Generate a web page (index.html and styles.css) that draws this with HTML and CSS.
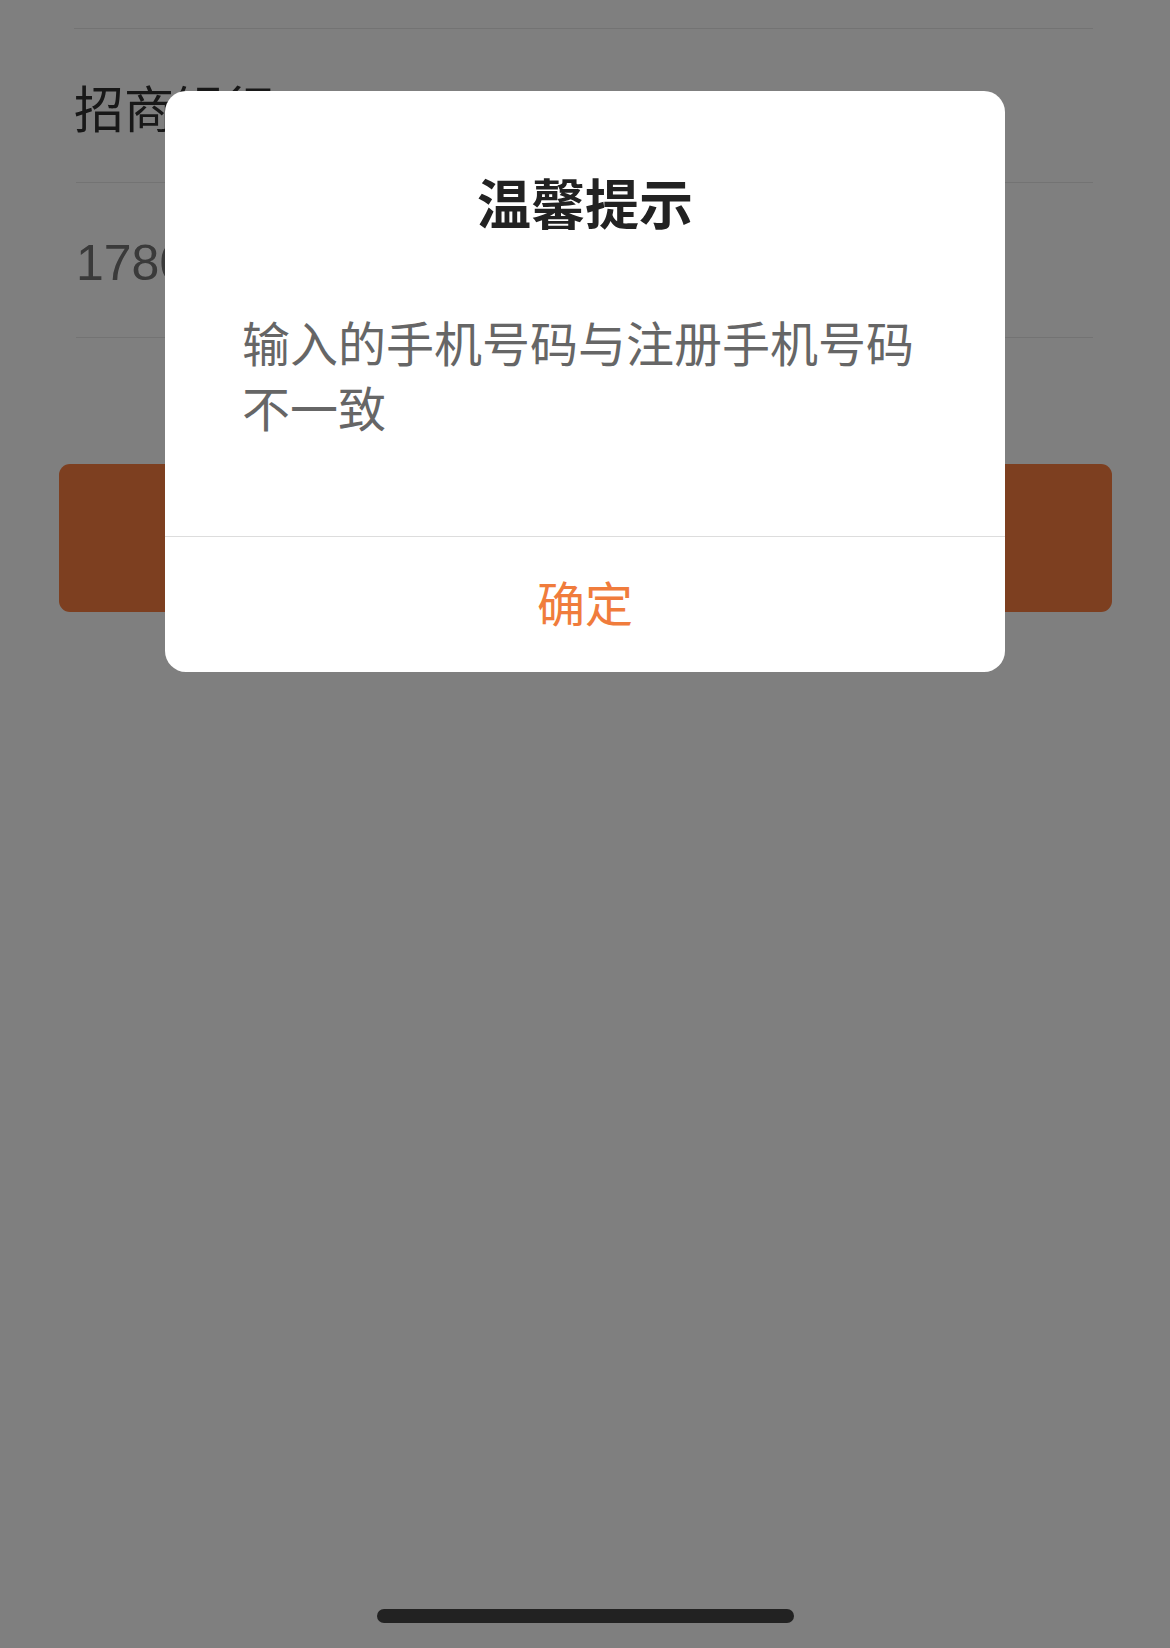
FILE: index.html
```html
<!DOCTYPE html>
<html lang="zh-CN">
<head>
<meta charset="utf-8">
<title>温馨提示</title>
<link rel="stylesheet" href="styles.css">
</head>
<body>
<div class="page">
  <div class="list">
    <div class="top-gap"></div>
    <div class="row row-bank">招商银行</div>
    <div class="row row-phone">17800000000</div>
  </div>
  <div class="submit"></div>
</div>

<div class="mask">
  <div class="dialog">
    <div class="dialog-title">温馨提示</div>
    <div class="dialog-msg">输入的手机号码与注册手机号码不一致</div>
    <div class="dialog-btn">确定</div>
  </div>
  <div class="home-indicator"></div>
</div>
</body>
</html>
```

FILE: styles.css
```css
html, body {
  margin: 0;
  padding: 0;
}
body {
  width: 1170px;
  height: 1648px;
  background: #ffffff;
  font-family: "Liberation Sans", "Noto Sans CJK SC", sans-serif;
  overflow: hidden;
  position: relative;
}
.page {
  display: flex;
  flex-direction: column;
}
.list {
  padding: 0 77px 0 76px;
  display: flex;
  flex-direction: column;
}
.top-gap {
  height: 28px;
}
.row {
  height: 154px;
  border-top: 1px solid #e6e6e6;
  display: flex;
  align-items: center;
  box-sizing: border-box;
  font-size: 50px;
}
.row-bank {
  color: #303030;
  font-family: "Noto Sans CJK SC", sans-serif;
  margin-left: -2px;
}
.row-phone {
  color: #747474;
  border-bottom: 1px solid #e6e6e6;
  height: 156px;
  padding-top: 6px;
  font-size: 50px;
}
.submit {
  margin: 126px 58px 0 59px;
  height: 148px;
  border-radius: 11px;
  background: #fa7e40;
}
.mask {
  position: absolute;
  inset: 0;
  background: rgba(0, 0, 0, 0.5);
}
.dialog {
  position: absolute;
  left: 165px;
  top: 91px;
  width: 840px;
  background: #ffffff;
  border-radius: 21px;
  overflow: hidden;
  display: flex;
  flex-direction: column;
  font-family: "Noto Sans CJK SC", sans-serif;
}
.dialog-title {
  padding-top: 80px;
  font-size: 54px;
  line-height: 62px;
  font-weight: 700;
  color: #222222;
  text-align: center;
}
.dialog-msg {
  padding: 76px 77px 97px 77px;
  font-size: 48px;
  line-height: 65px;
  color: #666666;
}
.dialog-btn {
  height: 136px;
  border-top: 1px solid #dddddd;
  box-sizing: border-box;
  display: flex;
  align-items: center;
  justify-content: center;
  padding-bottom: 8px;
  font-size: 48px;
  color: #f07c3c;
}
.home-indicator {
  position: absolute;
  left: 377px;
  top: 1609px;
  width: 417px;
  height: 14px;
  border-radius: 7px;
  background: #222222;
}
```
